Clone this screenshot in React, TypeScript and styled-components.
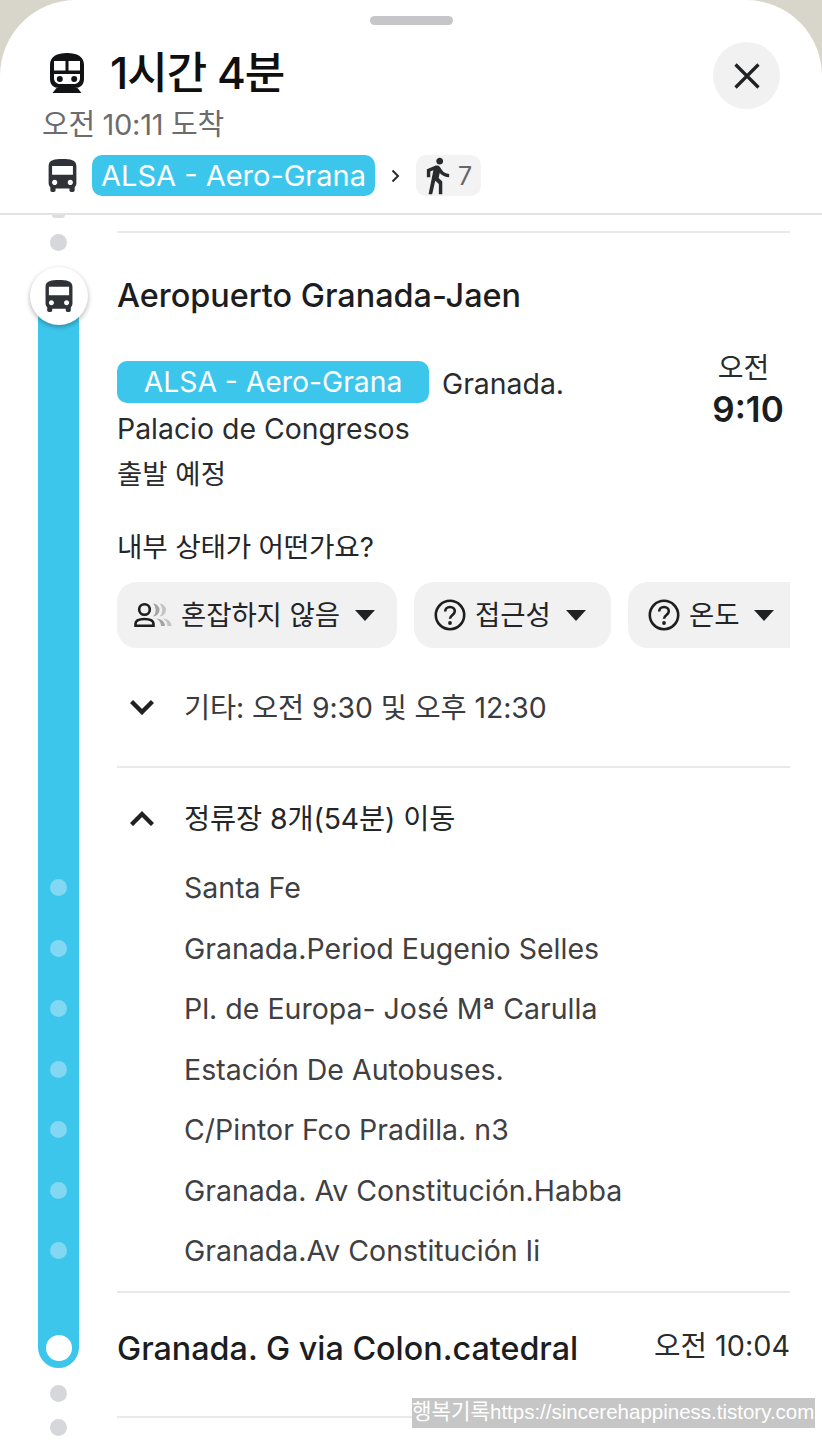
import React from "react";
import styled, { createGlobalStyle } from "styled-components";

const Global = createGlobalStyle`
  html, body { margin: 0; padding: 0; height: 1440px; overflow: hidden; background: #d8d5cb; }
  * { box-sizing: border-box; }
  #root { font-family: Inter, "Noto Sans CJK KR", sans-serif; color: #1f2022; }
`;

const Sheet = styled.div`
  position: relative;
  width: 822px;
  height: 1440px;
  background: #fff;
  border-radius: 76px 76px 0 0;
  overflow: hidden;
`;

const Header = styled.header`
  height: 215px;
  padding: 16px 42px 0 42px;
  border-bottom: 2px solid #e3e3e5;
`;

const Handle = styled.div`
  width: 83px;
  height: 9px;
  margin: 0 auto;
  border-radius: 5px;
  background: #c6c6c8;
`;

const TitleRow = styled.div`
  display: flex;
  align-items: center;
  height: 67px;
  margin-top: 17px;
`;

const TitleGroup = styled.div`
  display: flex;
  flex: 1;
  align-items: center;
  margin-bottom: 6px;
  padding-left: 8px;
`;

const Title = styled.h1`
  margin: 0 0 0 26px;
  font-family: Inter, "Noto Sans CJK KR", sans-serif;
  font-size: 44px;
  font-weight: 500;
  letter-spacing: -1px;
  line-height: 60px;
  color: #0f0f10;
`;

const CloseButton = styled.div`
  display: flex;
  align-items: center;
  justify-content: center;
  width: 67px;
  height: 67px;
  border-radius: 50%;
  background: #f1f1f1;
`;

const Arrival = styled.div`
  margin-top: -2px;
  font-size: 29px;
  line-height: 36px;
  letter-spacing: -0.3px;
  color: #6c6c6e;
`;

const RouteRow = styled.div`
  display: flex;
  align-items: center;
  height: 41px;
  margin-top: 12px;
  padding-left: 4px;
`;

const LinePill = styled.span<{ $wide?: boolean }>`
  display: inline-flex;
  align-items: center;
  justify-content: center;
  height: ${(p) => (p.$wide ? 42 : 41)}px;
  width: ${(p) => (p.$wide ? 312 : 283)}px;
  border-radius: 10px;
  background: #3dc6ec;
  color: #fff;
  font-size: ${(p) => (p.$wide ? 28.3 : 29)}px;
  letter-spacing: 0;
  white-space: nowrap;
  vertical-align: top;
`;

const PillGap = styled.span`
  flex: none;
  width: 13px;
`;

const Caret = styled.span`
  display: flex;
  width: 41px;
  justify-content: center;
`;

const WalkChip = styled.div`
  display: flex;
  align-items: center;
  gap: 8px;
  width: 65px;
  height: 41px;
  padding-left: 10px;
  border-radius: 10px;
  background: #f3f3f3;
  color: #666668;
  font-size: 25px;
`;

const Body = styled.div`
  display: flex;
`;

const Rail = styled.div`
  display: flex;
  flex: 0 0 117px;
  flex-direction: column;
  align-items: center;
`;

const PeekDot = styled.div`
  width: 13px;
  height: 3px;
  border-radius: 0 0 8px 8px;
  background: #dcdde0;
`;

const Dot = styled.div<{ $mt: number }>`
  flex: none;
  width: 17px;
  height: 17px;
  margin-top: ${(p) => p.$mt}px;
  border-radius: 50%;
  background: #d6d7db;
`;

const Line = styled.div`
  display: flex;
  flex-direction: column;
  align-items: center;
  width: 41px;
  height: 1072px;
  margin-top: 45px;
  border-radius: 0 0 21px 21px;
  background: #3dc6ec;
`;

const BusBadge = styled.div`
  display: flex;
  flex: none;
  align-items: center;
  justify-content: center;
  width: 58px;
  height: 58px;
  margin-top: -29px;
  border-radius: 50%;
  background: #fff;
  box-shadow: 0 2px 5px rgba(0, 0, 0, 0.3);
`;

const Stop = styled.div<{ $mt: number }>`
  flex: none;
  width: 17px;
  height: 17px;
  margin-top: ${(p) => p.$mt}px;
  border-radius: 50%;
  background: #82d7f2;
`;

const EndStop = styled.div`
  flex: none;
  width: 26px;
  height: 26px;
  margin-top: 76px;
  border-radius: 50%;
  background: #fff;
`;

const Content = styled.div`
  flex: 0 0 673px;
  min-width: 0;
`;

const Rule = styled.div<{ $mt: number }>`
  height: 2px;
  margin-top: ${(p) => p.$mt}px;
  background: #e9e9eb;
`;

const StopName = styled.div`
  margin-top: 41px;
  font-size: 32.4px;
  font-weight: 500;
  line-height: 44px;
  letter-spacing: 0;
  color: #1c1d1f;
`;

const Departure = styled.div`
  display: flex;
  justify-content: space-between;
  margin-top: 43px;
`;

const DepartText = styled.div`
  font-size: 28.4px;
  line-height: 45px;
  color: #2a2b2d;
`;

const Inline = styled.span`
  margin-left: 13px;
`;

const Status = styled.span`
  font-size: 27.5px;
`;

const TimeBox = styled.div`
  display: flex;
  flex-direction: column;
  align-items: center;
  width: 70px;
  margin-right: 7px;
  margin-top: -11px;
`;

const TimeLabel = styled.div`
  margin-right: 9px;
  font-size: 28px;
  line-height: 36px;
  color: #2a2b2d;
`;

const TimeValue = styled.div`
  font-size: 35px;
  font-weight: 600;
  line-height: 46px;
  color: #1c1d1f;
`;

const Question = styled.div`
  margin-top: 30px;
  font-size: 27.7px;
  line-height: 40px;
  letter-spacing: -0.2px;
  color: #242527;
`;

const Chips = styled.div`
  display: flex;
  gap: 17px;
  margin-top: 15px;
  overflow: hidden;
`;

const Chip = styled.div<{ $w: number; $pad: number }>`
  display: flex;
  flex: 0 0 ${(p) => p.$w}px;
  align-items: center;
  height: 66px;
  padding-left: ${(p) => p.$pad}px;
  border-radius: 20px;
  background: #f1f1f1;
  font-size: 27.5px;
  letter-spacing: -0.1px;
  color: #232426;
`;

const ChipLabel = styled.span`
  margin-left: 9px;
  margin-bottom: 4px;
`;

const ChipCaret = styled.span`
  flex: none;
  width: 0;
  height: 0;
  margin-left: 15px;
  border-left: 10.5px solid transparent;
  border-right: 10.5px solid transparent;
  border-top: 11px solid #202123;
`;

const ExpandRow = styled.div<{ $mt: number; $dark?: boolean }>`
  display: flex;
  align-items: center;
  height: 40px;
  margin-top: ${(p) => p.$mt}px;
  font-size: 28.4px;
  letter-spacing: -0.1px;
  color: ${(p) => (p.$dark ? "#242527" : "#3a3b3d")};
`;

const Chevron = styled.span`
  display: flex;
  flex: 0 0 67px;
  margin-top: 3px;
  padding-left: 13px;
`;

const StopList = styled.div`
  display: flex;
  flex-direction: column;
  gap: 20.5px;
  margin: 32px 0 0 67px;
`;

const StopItem = styled.div`
  height: 40px;
  font-size: 28.5px;
  line-height: 40px;
  color: #3f4042;
`;

const FinalRow = styled.div`
  display: flex;
  align-items: center;
  justify-content: space-between;
  margin-top: 33px;
  height: 44px;
`;

const FinalName = styled.div`
  font-size: 32.3px;
  font-weight: 500;
  color: #1c1d1f;
`;

const FinalTime = styled.div`
  margin-top: -10px;
  font-size: 28.8px;
  color: #2a2b2d;
`;

const Watermark = styled.div`
  position: absolute;
  left: 412px;
  top: 1398px;
  width: 403px;
  height: 30px;
  background: #c6c6c6;
  color: #fff;
  font-size: 20.5px;
  line-height: 27px;
  white-space: nowrap;
  overflow: hidden;
  font-family: "Liberation Sans", "Noto Sans CJK KR", sans-serif;
`;

const WatermarkName = styled.span`
  font-size: 21.2px;
`;

const busPath =
  "M4 16c0 .88.39 1.67 1 2.22V20c0 .55.45 1 1 1h1c.55 0 1-.45 1-1v-1h8v1c0 .55.45 1 1 1h1c.55 0 1-.45 1-1v-1.78c.61-.55 1-1.34 1-2.22V6c0-3.5-3.58-4-8-4s-8 .5-8 4v10zm3.5 1c-.83 0-1.5-.67-1.5-1.5S6.67 14 7.5 14s1.5.67 1.5 1.5S8.33 17 7.5 17zm9 0c-.83 0-1.5-.67-1.5-1.5s.67-1.5 1.5-1.5 1.5.67 1.5 1.5-.67 1.5-1.5 1.5zm1.5-6H6V6h12v5z";

const BusIcon = ({ size }: { size: number }) => (
  <svg width={size} height={size} viewBox="3.5 2 17 19" fill="#2f3337">
    <path d={busPath} />
  </svg>
);

const TrainIcon = () => (
  <svg width="34" height="40" viewBox="0 0 34 40">
    <path
      fill="#121314"
      d="M17 0C7 0 0 3.5 0 12v14c0 6 4 9 9 9h16c5 0 9-3 9-9V12C34 3.5 27 0 17 0zM6.5 35h21l4 5h-29z"
    />
    <path fill="#fff" d="M4 8h11.5v9.5H4zM18.5 8H30v9.5H18.5zM4 21h26v4c0 3.5-2.5 6-6 6H10c-3.5 0-6-2.5-6-6z" />
    <circle cx="9.8" cy="26" r="3" fill="#121314" />
    <circle cx="24.2" cy="26" r="3" fill="#121314" />
  </svg>
);

const WalkIcon = () => (
  <svg width="24" height="38" viewBox="5.5 1 14 22.5" fill="#2a2b2d" preserveAspectRatio="none">
    <path d="M13.5 5.5c1.1 0 2-.9 2-2s-.9-2-2-2-2 .9-2 2 .9 2 2 2zM9.8 8.9L7 23h2.1l1.8-8 2.1 2v6h2v-7.5l-2.1-2 .6-3C14.8 12 16.8 13 19 13v-2c-1.9 0-3.5-1-4.3-2.4l-1-1.6c-.4-.6-1-1-1.7-1-.3 0-.5.1-.8.1L6 8.3V13h2V9.6l1.8-.7" />
  </svg>
);

const CloseIcon = () => (
  <svg width="26" height="26" viewBox="0 0 26 26" fill="none" stroke="#202123" strokeWidth="3.2">
    <path d="M1.5 1.5l23 23M24.5 1.5l-23 23" />
  </svg>
);

const SmallCaret = () => (
  <svg width="9" height="14" viewBox="0 0 9 14" fill="none" stroke="#2a2b2d" strokeWidth="2">
    <path d="M1.5 1.5L7 7l-5.5 5.5" />
  </svg>
);

const CrowdIcon = () => (
  <svg width="38" height="28" viewBox="0 0 38 28" fill="none">
    <path d="M25.5 2.5a6.5 6.5 0 0 1 0 13a9 9 0 0 0 0-13z" fill="#c4c4c4" />
    <path d="M19 2.5a6.5 6.5 0 0 1 0 13a9 9 0 0 0 0-13z" fill="#a4a4a4" />
    <path d="M28.5 17.5c5 0 9 3 9 7.5h-4c0-3.5-2-6-5-7.5z" fill="#c4c4c4" />
    <path d="M22 17.5c5 0 9 3 9 7.5h-4c0-3.5-2-6-5-7.5z" fill="#a4a4a4" />
    <circle cx="10.5" cy="8.5" r="5.3" stroke="#1d1e20" strokeWidth="2.6" />
    <path d="M1.5 24.8v-2c0-3 3.5-4.8 9-4.8s9 1.8 9 4.8v2z" stroke="#1d1e20" strokeWidth="2.6" />
  </svg>
);

const HelpIcon = () => (
  <svg width="32" height="32" viewBox="0 0 32 32" fill="none">
    <circle cx="16" cy="16" r="14.2" stroke="#1d1e20" strokeWidth="2.6" />
    <path d="M11.2 12.6c0-2.8 2-4.6 4.8-4.6s4.8 1.8 4.8 4.2c0 3.6-4.8 3.8-4.8 7.6" stroke="#1d1e20" strokeWidth="2.6" />
    <circle cx="16" cy="24" r="1.9" fill="#1d1e20" />
  </svg>
);

const ChevronIcon = ({ up }: { up?: boolean }) => (
  <svg width="24" height="16" viewBox="0 0 24 16" fill="none" stroke="#202123" strokeWidth="4.4">
    <path d={up ? "M1.5 14.5L12 4l10.5 10.5" : "M1.5 2.5L12 13 22.5 2.5"} />
  </svg>
);

const stops = [
  "Santa Fe",
  "Granada.Period Eugenio Selles",
  "Pl. de Europa- José Mª Carulla",
  "Estación De Autobuses.",
  "C/Pintor Fco Pradilla. n3",
  "Granada. Av Constitución.Habba",
  "Granada.Av Constitución Ii",
];

export default function App() {
  return (
    <>
      <Global />
      <Sheet>
        <Header>
          <Handle />
          <TitleRow>
            <TitleGroup>
              <TrainIcon />
              <Title>1시간 4분</Title>
            </TitleGroup>
            <CloseButton>
              <CloseIcon />
            </CloseButton>
          </TitleRow>
          <Arrival>오전 10:11 도착</Arrival>
          <RouteRow>
            <BusIcon size={33} />
            <PillGap />
            <LinePill>ALSA - Aero-Grana</LinePill>
            <Caret>
              <SmallCaret />
            </Caret>
            <WalkChip>
              <WalkIcon />
              7
            </WalkChip>
          </RouteRow>
        </Header>
        <Body>
          <Rail>
            <PeekDot />
            <Dot $mt={16} />
            <Line>
              <BusBadge>
                <BusIcon size={32} />
              </BusBadge>
              <Stop $mt={554} />
              <Stop $mt={43.5} />
              <Stop $mt={43.5} />
              <Stop $mt={43.5} />
              <Stop $mt={43.5} />
              <Stop $mt={43.5} />
              <Stop $mt={43.5} />
              <EndStop />
            </Line>
            <Dot $mt={17} />
            <Dot $mt={17} />
          </Rail>
          <Content>
            <Rule $mt={16} />
            <StopName>Aeropuerto Granada-Jaen</StopName>
            <Departure>
              <DepartText>
                <LinePill $wide>ALSA - Aero-Grana</LinePill>
                <Inline>Granada.</Inline>
                <br />
                Palacio de Congresos
                <br />
                <Status>출발 예정</Status>
              </DepartText>
              <TimeBox>
                <TimeLabel>오전</TimeLabel>
                <TimeValue>9:10</TimeValue>
              </TimeBox>
            </Departure>
            <Question>내부 상태가 어떤가요?</Question>
            <Chips>
              <Chip $w={280} $pad={17}>
                <CrowdIcon />
                <ChipLabel>혼잡하지 않음</ChipLabel>
                <ChipCaret />
              </Chip>
              <Chip $w={197} $pad={20}>
                <HelpIcon />
                <ChipLabel>접근성</ChipLabel>
                <ChipCaret />
              </Chip>
              <Chip $w={180} $pad={20}>
                <HelpIcon />
                <ChipLabel>온도</ChipLabel>
                <ChipCaret />
              </Chip>
            </Chips>
            <ExpandRow $mt={37}>
              <Chevron>
                <ChevronIcon />
              </Chevron>
              기타: 오전 9:30 및 오후 12:30
            </ExpandRow>
            <Rule $mt={41} />
            <ExpandRow $mt={28} $dark>
              <Chevron>
                <ChevronIcon up />
              </Chevron>
              정류장 8개(54분) 이동
            </ExpandRow>
            <StopList>
              {stops.map((s) => (
                <StopItem key={s}>{s}</StopItem>
              ))}
            </StopList>
            <Rule $mt={20} />
            <FinalRow>
              <FinalName>Granada. G via Colon.catedral</FinalName>
              <FinalTime>오전 10:04</FinalTime>
            </FinalRow>
            <Rule $mt={46} />
          </Content>
        </Body>
        <Watermark>
          <WatermarkName>행복기록</WatermarkName>https://sincerehappiness.tistory.com
        </Watermark>
      </Sheet>
    </>
  );
}
